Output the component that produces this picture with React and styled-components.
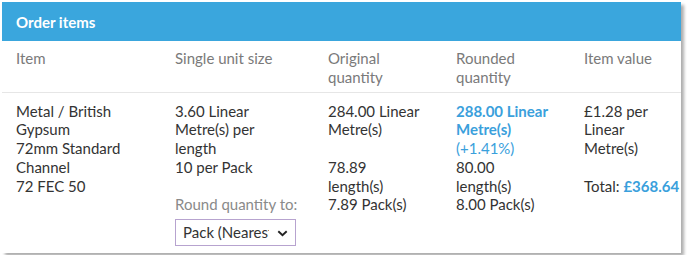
import React from 'react'
import styled, {createGlobalStyle} from 'styled-components'

const LINE = 18.75

const GlobalStyle = createGlobalStyle`
  body {
    margin: 0;
    background: #ffffff;
    font-family: Lato, 'Open Sans', sans-serif;
  }
`

const Page = styled.div`
  padding: 2px;
`

const Card = styled.div`
  width: 679px;
  height: 251px;
  background: #ffffff;
  box-shadow: 3px 3px 3px rgba(0, 0, 0, 0.32);
  overflow: hidden;
`

const CardHeader = styled.div`
  height: 39px;
  display: flex;
  align-items: center;
  padding: 0 14px;
  background: #3aa6dd;
  color: #ffffff;
  font-size: 15px;
  font-weight: 700;
`

const Row = styled.div`
  display: grid;
  grid-template-columns: 159px 153px 128px 128px 1fr;
  font-size: 15px;
  line-height: ${LINE}px;
  padding: ${(props) => (props.head ? '8px 0 5px' : '9px 0 7px')};
  border-bottom: ${(props) => (props.head ? '1px solid #e6e6e6' : 'none')};
  color: ${(props) => (props.head ? '#7a7a7a' : '#333333')};
`

const Cell = styled.div`
  display: flex;
  flex-direction: column;
  padding: 0 ${(props) => props.pr || 14}px 0 14px;
`

const Block = styled.div`
  min-height: ${(props) => (props.lines ? props.lines * LINE : 0)}px;
  white-space: ${(props) => (props.nowrap ? 'nowrap' : 'normal')};
`

const Highlight = styled.span`
  color: #3aa0dc;
  font-weight: ${(props) => (props.bold ? 700 : 400)};
`

const Label = styled.div`
  margin-top: 18px;
  color: #8a8a8a;
  white-space: nowrap;
`

const Select = styled.div`
  position: relative;
  margin-top: 6px;
  width: 121px;
  height: 27px;
  box-sizing: border-box;
  border: 1px solid #b7a3cf;
  display: flex;
  align-items: center;
  padding: 0 26px 0 7px;
  color: #333333;
`

const SelectText = styled.span`
  overflow: hidden;
  white-space: nowrap;
`

const Chevron = styled.svg`
  position: absolute;
  right: 7px;
  top: 10px;
`

export default function App() {
  return (
    <Page>
      <GlobalStyle />
      <Card>
        <CardHeader>Order items</CardHeader>
        <Row head>
          <Cell>Item</Cell>
          <Cell>Single unit size</Cell>
          <Cell>Original quantity</Cell>
          <Cell>Rounded quantity</Cell>
          <Cell pr={4}>Item value</Cell>
        </Row>
        <Row>
          <Cell>
            <Block>Metal / British Gypsum</Block>
            <Block>72mm Standard Channel</Block>
            <Block>72 FEC 50</Block>
          </Cell>
          <Cell pr={20}>
            <Block>3.60 Linear Metre(s) per length</Block>
            <Block>10 per Pack</Block>
            <Label>Round quantity to:</Label>
            <Select>
              <SelectText>Pack (Nearest)</SelectText>
              <Chevron width='11' height='7' viewBox='0 0 11 7'>
                <path
                  d='M1.3 1.2 L5.5 5.2 L9.7 1.2'
                  fill='none'
                  stroke='#222'
                  strokeWidth='1.9'
                />
              </Chevron>
            </Select>
          </Cell>
          <Cell>
            <Block lines={3}>284.00 Linear Metre(s)</Block>
            <Block>
              78.89
              <br />
              length(s)
            </Block>
            <Block nowrap>7.89 Pack(s)</Block>
          </Cell>
          <Cell>
            <Block lines={3}>
              <Highlight bold>288.00 Linear Metre(s)</Highlight>
              <br />
              <Highlight>(+1.41%)</Highlight>
            </Block>
            <Block>
              80.00
              <br />
              length(s)
            </Block>
            <Block nowrap>8.00 Pack(s)</Block>
          </Cell>
          <Cell pr={4}>
            <Block lines={4}>£1.28 per Linear Metre(s)</Block>
            <Block nowrap>
              Total: <Highlight bold>£368.64</Highlight>
            </Block>
          </Cell>
        </Row>
      </Card>
    </Page>
  )
}
